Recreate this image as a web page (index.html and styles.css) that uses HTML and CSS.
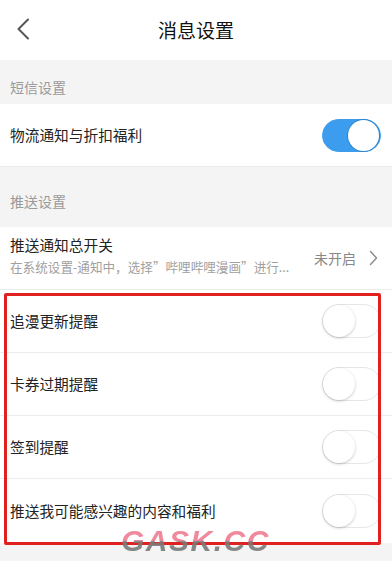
FILE: index.html
```html
<!DOCTYPE html>
<html lang="zh">
<head>
<meta charset="utf-8">
<link rel="stylesheet" href="styles.css">
</head>
<body>
<div class="page">
  <header class="nav">
    <svg class="back" width="14" height="22" viewBox="0 0 14 22"><path d="M12 1.5 L2.5 11 L12 20.5" fill="none" stroke="#555" stroke-width="2" stroke-linecap="round" stroke-linejoin="round"/></svg>
    <h1 class="title">消息设置</h1>
  </header>

  <div class="section first">短信设置</div>
  <div class="row">
    <span class="label">物流通知与折扣福利</span>
    <span class="switch on"><span class="knob"></span></span>
  </div>

  <div class="section second">推送设置</div>
  <div class="row tall">
    <div class="texts">
      <div class="label">推送通知总开关</div>
      <div class="sub">在系统设置-通知中，选择”哔哩哔哩漫画”进行...</div>
    </div>
    <div class="status">
      <span>未开启</span>
      <svg width="9" height="16" viewBox="0 0 9 16"><path d="M1.5 1.5 L7.5 8 L1.5 14.5" fill="none" stroke="#8a8a8a" stroke-width="1.4" stroke-linecap="round" stroke-linejoin="round"/></svg>
    </div>
  </div>
  <div class="row">
    <span class="label">追漫更新提醒</span>
    <span class="switch"><span class="knob"></span></span>
  </div>
  <div class="row">
    <span class="label">卡券过期提醒</span>
    <span class="switch"><span class="knob"></span></span>
  </div>
  <div class="row">
    <span class="label">签到提醒</span>
    <span class="switch"><span class="knob"></span></span>
  </div>
  <div class="row last">
    <span class="label">推送我可能感兴趣的内容和福利</span>
    <span class="switch"><span class="knob"></span></span>
  </div>
  <div class="rest"></div>

  <div class="highlight"></div>
  <div class="watermark">GASK.CC</div>
</div>
</body>
</html>
```

FILE: styles.css
```css
* { box-sizing: border-box; margin: 0; padding: 0; }
html, body { width: 392px; height: 561px; overflow: hidden; }
body {
  background: #f4f4f5;
  font-family: "Noto Sans CJK SC", "Noto Sans", sans-serif;
  color: #222;
}
.page { position: relative; width: 392px; height: 561px; overflow: hidden; }

.nav {
  height: 60px;
  background: #fff;
  display: flex;
  align-items: center;
  justify-content: center;
  position: relative;
}
.back { position: absolute; left: 16px; top: 18px; }
.title { font-size: 19px; font-weight: 400; color: #111; line-height: 26px; }

.section {
  color: #9a9a9a;
  font-size: 14px;
  line-height: 20px;
  padding-left: 10px;
}
.section.first { height: 44px; padding-top: 17px; }
.section.second { height: 60px; padding-top: 24px; }

.row {
  background: #fff;
  height: 63px;
  display: flex;
  align-items: center;
  justify-content: space-between;
  padding: 0 12px 0 10px;
  border-bottom: 1px solid #ececec;
}
.row.last { height: 64px; border-bottom: none; }
.row.tall { height: 63px; align-items: flex-start; padding-top: 7px; }
.label { font-size: 14.7px; line-height: 22px; color: #222; }
.texts { display: flex; flex-direction: column; }
.sub {
  font-size: 12.6px;
  line-height: 18px;
  color: #a0a0a0;
  margin-top: 2px;
  white-space: nowrap;
}
.status {
  display: flex;
  align-items: center;
  gap: 13px;
  margin-top: 14px;
  color: #888;
  font-size: 14px;
  line-height: 20px;
  padding-right: 2px;
}

.switch {
  width: 59px;
  height: 34px;
  border-radius: 17px;
  background: #fff;
  border: 1px solid #e6e6e6;
  position: relative;
  flex: none;
  margin-right: -1px;
}
.switch .knob {
  position: absolute;
  left: 0;
  top: 0;
  width: 32px;
  height: 32px;
  border-radius: 50%;
  background: #fff;
  box-shadow: 0 1px 3px rgba(0,0,0,0.22);
}
.switch.on {
  background: #3c9ced;
  border-color: #3c9ced;
  height: 33px;
}
.switch.on .knob {
  left: auto;
  right: 1px;
  top: 0;
  width: 31px;
  height: 31px;
  box-shadow: 0 0 0 1px #2f86cf;
}

.rest { height: 21px; }

.highlight {
  position: absolute;
  left: 4px;
  top: 293px;
  width: 377px;
  height: 252px;
  border: 3px solid #e1211f;
  border-radius: 2px;
  pointer-events: none;
}
.watermark {
  position: absolute;
  left: 121px;
  top: 524px;
  font-family: "Liberation Sans", sans-serif;
  font-weight: 700;
  font-style: italic;
  font-size: 30px;
  line-height: 34px;
  letter-spacing: 1.5px;
  background: linear-gradient(to bottom, #f07d93 0%, #f07d93 48%, #7a7a7a 52%, #7a7a7a 100%);
  -webkit-background-clip: text;
  background-clip: text;
  color: transparent;
  opacity: 0.9;
}
```
